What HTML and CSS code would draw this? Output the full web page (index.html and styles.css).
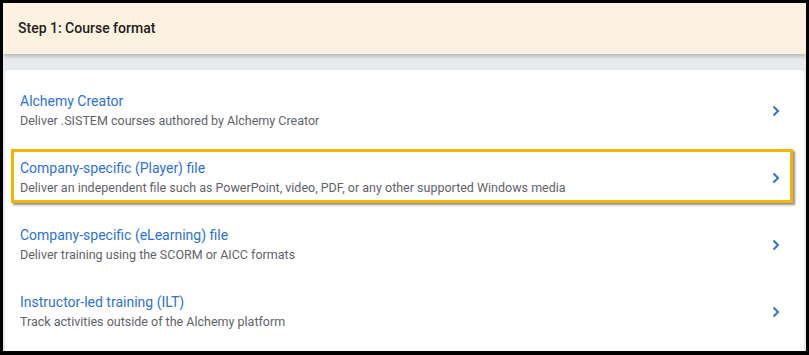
FILE: index.html
```html
<!DOCTYPE html>
<html lang="en">
<head>
  <meta charset="UTF-8" />
  <title>Step 1: Course format</title>
  <link rel="stylesheet" href="styles.css">
</head>
<body>
  <div class="frame">
    <div class="step-header">Step 1: Course format</div>
    <div class="step-body">
      <div class="format-card">
        <a href="#" class="format-row">
          <div class="format-text">
            <div class="format-title">Alchemy Creator</div>
            <div class="format-desc">Deliver .SISTEM courses authored by Alchemy Creator</div>
          </div>
          <svg class="chevron" viewBox="0 0 8 12"><path d="M1.5 1.5 L6 6 L1.5 10.5" /></svg>
        </a>
        <a href="#" class="format-row selected">
          <div class="format-text">
            <div class="format-title">Company-specific (Player) file</div>
            <div class="format-desc">Deliver an independent file such as PowerPoint, video, PDF, or any other supported Windows media</div>
          </div>
          <svg class="chevron" viewBox="0 0 8 12"><path d="M1.5 1.5 L6 6 L1.5 10.5" /></svg>
        </a>
        <a href="#" class="format-row">
          <div class="format-text">
            <div class="format-title">Company-specific (eLearning) file</div>
            <div class="format-desc">Deliver training using the SCORM or AICC formats</div>
          </div>
          <svg class="chevron" viewBox="0 0 8 12"><path d="M1.5 1.5 L6 6 L1.5 10.5" /></svg>
        </a>
        <a href="#" class="format-row">
          <div class="format-text">
            <div class="format-title">Instructor-led training (ILT)</div>
            <div class="format-desc">Track activities outside of the Alchemy platform</div>
          </div>
          <svg class="chevron" viewBox="0 0 8 12"><path d="M1.5 1.5 L6 6 L1.5 10.5" /></svg>
        </a>
      </div>
    </div>
  </div>
</body>
</html>
```
FILE: styles.css
```css
html, body {
  margin: 0;
  padding: 0;
  height: 100%;
  overflow: hidden;
}

body {
  background: #000;
  font-family: Roboto, "Noto Sans", sans-serif;
  padding: 3px 3px 4px 3px;
  box-sizing: border-box;
}

.frame {
  height: 100%;
  background: #e8ebee;
  display: flex;
  flex-direction: column;
}

.step-header {
  height: 51px;
  flex: none;
  background: #fcf2df;
  display: flex;
  align-items: center;
  padding-left: 15px;
  padding-bottom: 2px;
  box-sizing: border-box;
  font-size: 14px;
  font-weight: 500;
  color: #212121;
  box-shadow: 0 2px 4px rgba(0, 0, 0, 0.25);
  position: relative;
  z-index: 1;
}

.step-body {
  flex: 1;
  padding: 16px 2px 0 2px;
  display: flex;
  flex-direction: column;
  min-height: 0;
}

.format-card {
  flex: 1;
  background: #fff;
  border-radius: 4px 4px 0 0;
  padding-top: 7px;
}

.format-row {
  display: flex;
  align-items: center;
  height: 67px;
  padding: 0 24px 0 15px;
  text-decoration: none;
  position: relative;
}

.format-text {
  flex: 1;
}

.format-title {
  font-size: 14px;
  color: #2e72d2;
  line-height: 19px;
}

.format-desc {
  font-size: 12.5px;
  color: #5f6368;
  line-height: 17px;
  margin-top: 1px;
}

.chevron {
  width: 8px;
  height: 12px;
  fill: none;
  stroke: #2e72d2;
  stroke-width: 2;
}

/* contorno amarillo de la fila elegida */
.format-row.selected::after {
  content: "";
  position: absolute;
  top: 5px;
  bottom: 8px;
  left: 6px;
  right: 11px;
  border: 3px solid #f6b400;
  box-shadow: 2px 2px 2px rgba(0, 0, 0, 0.45);
  pointer-events: none;
}
```
